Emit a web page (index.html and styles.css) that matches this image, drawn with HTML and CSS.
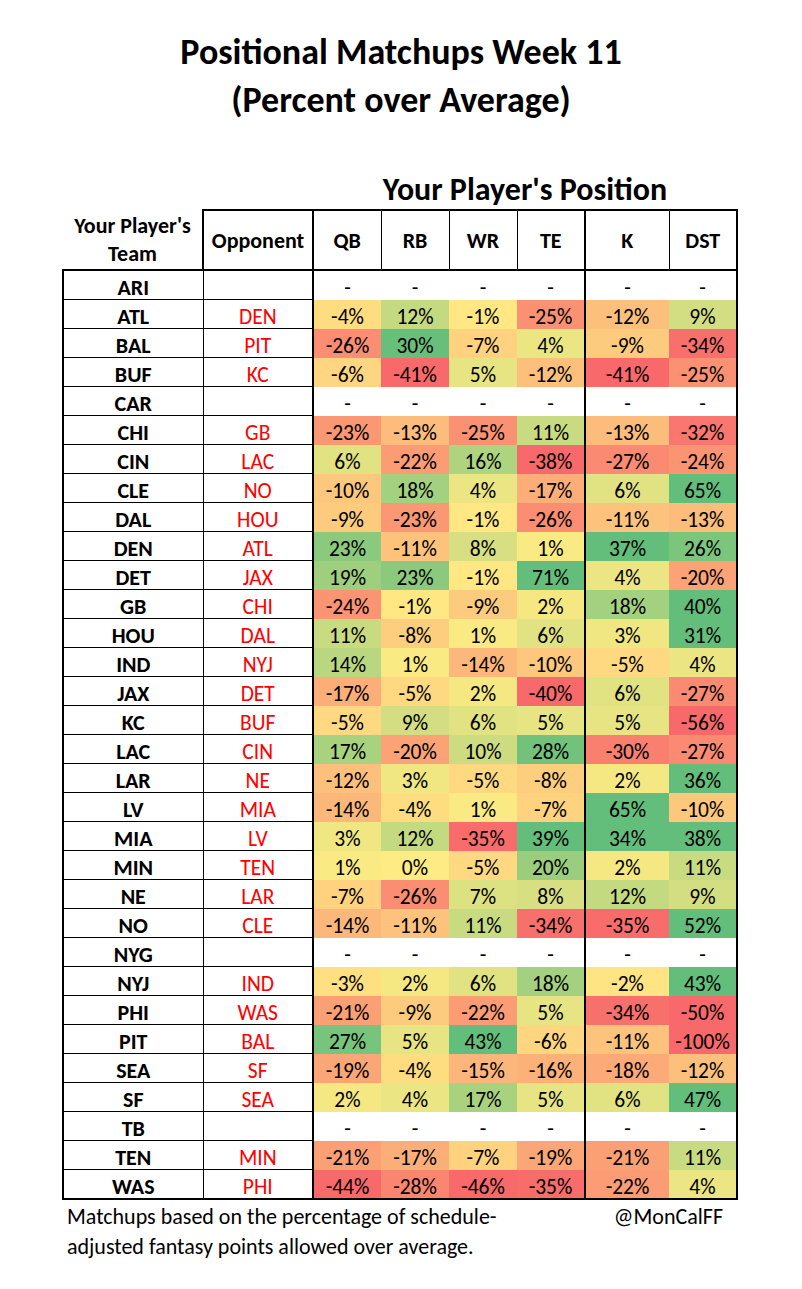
FILE: index.html
```html
<!DOCTYPE html>
<html>
<head>
<meta charset="utf-8">
<link rel="stylesheet" href="styles.css">
</head>
<body>
<div class="page">
  <h1 class="title">Positional Matchups Week 11<br>(Percent over Average)</h1>
  <div class="pos-caption">Your Player's Position</div>
  <table class="grid">
    <colgroup>
      <col class="c-team"><col class="c-opp"><col class="c-pos"><col class="c-pos"><col class="c-pos"><col class="c-pos"><col class="c-k"><col class="c-pos">
    </colgroup>
    <thead>
      <tr>
        <th class="h-team">Your Player's<br>Team</th>
        <th class="h-opp">Opponent</th>
        <th class="h-qb">QB</th>
        <th>RB</th>
        <th>WR</th>
        <th>TE</th>
        <th class="h-k">K</th>
        <th class="h-dst">DST</th>
      </tr>
    </thead>
    <tbody>
      <tr><td class="team">ARI</td><td class="opp"></td><td class="v qb">-</td><td class="v">-</td><td class="v">-</td><td class="v">-</td><td class="v k">-</td><td class="v dst">-</td></tr>
      <tr><td class="team">ATL</td><td class="opp">DEN</td><td class="v qb">-4%</td><td class="v">12%</td><td class="v">-1%</td><td class="v">-25%</td><td class="v k">-12%</td><td class="v dst">9%</td></tr>
      <tr><td class="team">BAL</td><td class="opp">PIT</td><td class="v qb">-26%</td><td class="v">30%</td><td class="v">-7%</td><td class="v">4%</td><td class="v k">-9%</td><td class="v dst">-34%</td></tr>
      <tr><td class="team">BUF</td><td class="opp">KC</td><td class="v qb">-6%</td><td class="v">-41%</td><td class="v">5%</td><td class="v">-12%</td><td class="v k">-41%</td><td class="v dst">-25%</td></tr>
      <tr><td class="team">CAR</td><td class="opp"></td><td class="v qb">-</td><td class="v">-</td><td class="v">-</td><td class="v">-</td><td class="v k">-</td><td class="v dst">-</td></tr>
      <tr><td class="team">CHI</td><td class="opp">GB</td><td class="v qb">-23%</td><td class="v">-13%</td><td class="v">-25%</td><td class="v">11%</td><td class="v k">-13%</td><td class="v dst">-32%</td></tr>
      <tr><td class="team">CIN</td><td class="opp">LAC</td><td class="v qb">6%</td><td class="v">-22%</td><td class="v">16%</td><td class="v">-38%</td><td class="v k">-27%</td><td class="v dst">-24%</td></tr>
      <tr><td class="team">CLE</td><td class="opp">NO</td><td class="v qb">-10%</td><td class="v">18%</td><td class="v">4%</td><td class="v">-17%</td><td class="v k">6%</td><td class="v dst">65%</td></tr>
      <tr><td class="team">DAL</td><td class="opp">HOU</td><td class="v qb">-9%</td><td class="v">-23%</td><td class="v">-1%</td><td class="v">-26%</td><td class="v k">-11%</td><td class="v dst">-13%</td></tr>
      <tr><td class="team">DEN</td><td class="opp">ATL</td><td class="v qb">23%</td><td class="v">-11%</td><td class="v">8%</td><td class="v">1%</td><td class="v k">37%</td><td class="v dst">26%</td></tr>
      <tr><td class="team">DET</td><td class="opp">JAX</td><td class="v qb">19%</td><td class="v">23%</td><td class="v">-1%</td><td class="v">71%</td><td class="v k">4%</td><td class="v dst">-20%</td></tr>
      <tr><td class="team">GB</td><td class="opp">CHI</td><td class="v qb">-24%</td><td class="v">-1%</td><td class="v">-9%</td><td class="v">2%</td><td class="v k">18%</td><td class="v dst">40%</td></tr>
      <tr><td class="team">HOU</td><td class="opp">DAL</td><td class="v qb">11%</td><td class="v">-8%</td><td class="v">1%</td><td class="v">6%</td><td class="v k">3%</td><td class="v dst">31%</td></tr>
      <tr><td class="team">IND</td><td class="opp">NYJ</td><td class="v qb">14%</td><td class="v">1%</td><td class="v">-14%</td><td class="v">-10%</td><td class="v k">-5%</td><td class="v dst">4%</td></tr>
      <tr><td class="team">JAX</td><td class="opp">DET</td><td class="v qb">-17%</td><td class="v">-5%</td><td class="v">2%</td><td class="v">-40%</td><td class="v k">6%</td><td class="v dst">-27%</td></tr>
      <tr><td class="team">KC</td><td class="opp">BUF</td><td class="v qb">-5%</td><td class="v">9%</td><td class="v">6%</td><td class="v">5%</td><td class="v k">5%</td><td class="v dst">-56%</td></tr>
      <tr><td class="team">LAC</td><td class="opp">CIN</td><td class="v qb">17%</td><td class="v">-20%</td><td class="v">10%</td><td class="v">28%</td><td class="v k">-30%</td><td class="v dst">-27%</td></tr>
      <tr><td class="team">LAR</td><td class="opp">NE</td><td class="v qb">-12%</td><td class="v">3%</td><td class="v">-5%</td><td class="v">-8%</td><td class="v k">2%</td><td class="v dst">36%</td></tr>
      <tr><td class="team">LV</td><td class="opp">MIA</td><td class="v qb">-14%</td><td class="v">-4%</td><td class="v">1%</td><td class="v">-7%</td><td class="v k">65%</td><td class="v dst">-10%</td></tr>
      <tr><td class="team">MIA</td><td class="opp">LV</td><td class="v qb">3%</td><td class="v">12%</td><td class="v">-35%</td><td class="v">39%</td><td class="v k">34%</td><td class="v dst">38%</td></tr>
      <tr><td class="team">MIN</td><td class="opp">TEN</td><td class="v qb">1%</td><td class="v">0%</td><td class="v">-5%</td><td class="v">20%</td><td class="v k">2%</td><td class="v dst">11%</td></tr>
      <tr><td class="team">NE</td><td class="opp">LAR</td><td class="v qb">-7%</td><td class="v">-26%</td><td class="v">7%</td><td class="v">8%</td><td class="v k">12%</td><td class="v dst">9%</td></tr>
      <tr><td class="team">NO</td><td class="opp">CLE</td><td class="v qb">-14%</td><td class="v">-11%</td><td class="v">11%</td><td class="v">-34%</td><td class="v k">-35%</td><td class="v dst">52%</td></tr>
      <tr><td class="team">NYG</td><td class="opp"></td><td class="v qb">-</td><td class="v">-</td><td class="v">-</td><td class="v">-</td><td class="v k">-</td><td class="v dst">-</td></tr>
      <tr><td class="team">NYJ</td><td class="opp">IND</td><td class="v qb">-3%</td><td class="v">2%</td><td class="v">6%</td><td class="v">18%</td><td class="v k">-2%</td><td class="v dst">43%</td></tr>
      <tr><td class="team">PHI</td><td class="opp">WAS</td><td class="v qb">-21%</td><td class="v">-9%</td><td class="v">-22%</td><td class="v">5%</td><td class="v k">-34%</td><td class="v dst">-50%</td></tr>
      <tr><td class="team">PIT</td><td class="opp">BAL</td><td class="v qb">27%</td><td class="v">5%</td><td class="v">43%</td><td class="v">-6%</td><td class="v k">-11%</td><td class="v dst">-100%</td></tr>
      <tr><td class="team">SEA</td><td class="opp">SF</td><td class="v qb">-19%</td><td class="v">-4%</td><td class="v">-15%</td><td class="v">-16%</td><td class="v k">-18%</td><td class="v dst">-12%</td></tr>
      <tr><td class="team">SF</td><td class="opp">SEA</td><td class="v qb">2%</td><td class="v">4%</td><td class="v">17%</td><td class="v">5%</td><td class="v k">6%</td><td class="v dst">47%</td></tr>
      <tr><td class="team">TB</td><td class="opp"></td><td class="v qb">-</td><td class="v">-</td><td class="v">-</td><td class="v">-</td><td class="v k">-</td><td class="v dst">-</td></tr>
      <tr><td class="team">TEN</td><td class="opp">MIN</td><td class="v qb">-21%</td><td class="v">-17%</td><td class="v">-7%</td><td class="v">-19%</td><td class="v k">-21%</td><td class="v dst">11%</td></tr>
      <tr class="last"><td class="team">WAS</td><td class="opp">PHI</td><td class="v qb">-44%</td><td class="v">-28%</td><td class="v">-46%</td><td class="v">-35%</td><td class="v k">-22%</td><td class="v dst">4%</td></tr>
    </tbody>
  </table>
  <div class="footer">
    <p class="note">Matchups based on the percentage of schedule-<br>adjusted fantasy points allowed over average.</p>
    <p class="handle">@MonCalFF</p>
  </div>
</div>
<script src="script.js"></script>
</body>
</html>
```

FILE: styles.css
```css
html, body {
  margin: 0;
  padding: 0;
  background: #ffffff;
}

body {
  font-family: Carlito, Lato, "Liberation Sans", sans-serif;
  color: #000;
}

.page {
  width: 802px;
  height: 1289px;
  box-sizing: border-box;
  padding-top: 28px;
}

.title {
  margin: 0;
  text-align: center;
  font-size: 36px;
  line-height: 48px;
  font-weight: 700;
}

.pos-caption {
  margin: 49px 0 0 313px;
  width: 424px;
  text-align: center;
  font-size: 32px;
  line-height: 34px;
  font-weight: 700;
}

.grid {
  margin: 2px 0 0 62px;
  border-collapse: collapse;
  table-layout: fixed;
  width: 676px;
  font-size: 21.5px;
}

.c-team { width: 140px; }
.c-opp { width: 110px; }
.c-pos { width: 68px; }
.c-k { width: 84px; }

.grid th {
  height: 58px;
  padding: 0;
  font-size: 22px;
  font-weight: 700;
  text-align: center;
  vertical-align: middle;
  border: 1px solid #000;
  border-top: 2px solid #000;
  border-bottom: 2px solid #000;
}

.grid th.h-team {
  border-top: none;
  border-left: none;
  line-height: 28px;
}

.grid th.h-opp { border-left: 2px solid #000; }
.grid th.h-qb { border-left: 2px solid #000; }
.grid th.h-k { border-left: 2px solid #000; }
.grid th.h-dst { border-right: 2px solid #000; }

.grid tbody tr {
  height: 29px;
}

.grid td {
  padding: 6px 0 0;
  text-align: center;
  vertical-align: top;
  line-height: 22px;
}

.grid td.team {
  font-size: 22px;
  font-weight: 700;
  border-left: 2px solid #000;
  border-right: 1px solid #000;
  border-bottom: 1px solid #000;
}

.grid td.opp {
  color: #ff0000;
  border-right: 2px solid #000;
  border-bottom: 1px solid #000;
}

.grid td.k { border-left: 2px solid #000; }
.grid td.dst { border-right: 2px solid #000; }

.grid tr.last td { border-bottom: 2px solid #000; }

.footer {
  display: flex;
  justify-content: space-between;
  align-items: flex-start;
  width: 656px;
  margin: 2px 0 0 67px;
  font-size: 22px;
  line-height: 30px;
}

.note, .handle {
  margin: 0;
}
```

FILE: script.js
```js
(function () {
  var RED = [248, 105, 107];
  var YEL = [255, 235, 132];
  var GRN = [99, 190, 123];
  var LO = -36, HI = 31;
  function mix(a, b, t) {
    return 'rgb(' + a.map(function (v, i) { return Math.round(v + (b[i] - v) * t); }).join(',') + ')';
  }
  var cells = document.querySelectorAll('.grid td.v');
  cells.forEach(function (td) {
    var n = parseFloat(td.textContent);
    if (isNaN(n)) return;
    var c;
    if (n >= 0) c = mix(YEL, GRN, Math.min(n / HI, 1));
    else c = mix(YEL, RED, Math.min(n / LO, 1));
    td.style.backgroundColor = c;
  });
})();
```
